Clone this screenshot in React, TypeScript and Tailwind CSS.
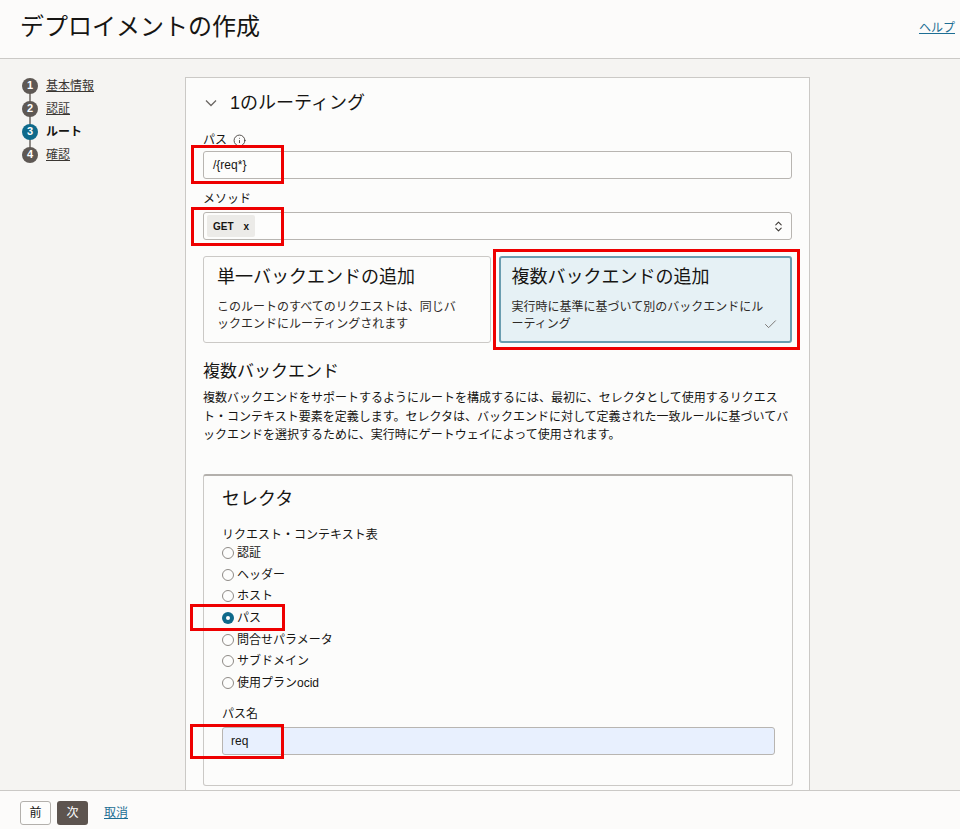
import React from "react";
import { Info, Check, ChevronsUpDown } from "lucide-react";

const steps = [
  { n: 1, label: "基本情報", active: false },
  { n: 2, label: "認証", active: false },
  { n: 3, label: "ルート", active: true },
  { n: 4, label: "確認", active: false },
];

const radios = ["認証", "ヘッダー", "ホスト", "パス", "問合せパラメータ", "サブドメイン", "使用プランocid"];

function RedBox({ cls }: { cls: string }) {
  return <div className={"pointer-events-none absolute border-[3px] border-[#ee0000] " + cls} />;
}

export default function App() {
  return (
    <div className="relative w-[960px] h-[829px] overflow-hidden bg-[#f5f4f2] text-[#161513] font-['Liberation_Sans','Noto_Sans_CJK_JP',sans-serif]">
      {/* Header */}
      <div className="h-[59px] bg-[#fcfbfa] border-b border-[#cbc9c6] flex items-center justify-between pl-[20px] pr-[5px]">
        <h1 className="text-[24px] leading-[30px] font-normal pb-[4px]">デプロイメントの作成</h1>
        <a className="text-[12px] leading-[16px] underline text-[#1d6e94] pb-[2px]">ヘルプ</a>
      </div>

      {/* Body */}
      <div className="flex h-[731px] overflow-hidden">
        <nav className="w-[185px] shrink-0 pl-[22px] pt-[15px]">
          <div className="relative">
            <div className="absolute left-[7px] top-[11px] h-[70px] w-[2px] bg-[#8d8985]" />
            {steps.map((s) => (
              <div key={s.n} className="relative flex items-center h-[23px]">
                <div
                  className={
                    "w-[16px] h-[16px] rounded-full flex items-center justify-center text-white text-[11px] font-bold leading-none " +
                    (s.active ? "bg-[#0f6a8b]" : "bg-[#5e5854]")
                  }
                >
                  {s.n}
                </div>
                <span
                  className={
                    "ml-[8px] text-[12px] leading-[16px] " +
                    (s.active ? "font-bold text-[#161513]" : "underline text-[#3a3632]")
                  }
                >
                  {s.label}
                </span>
              </div>
            ))}
          </div>
        </nav>

        <div className="mt-[18px] w-[625px] h-[760px] shrink-0 bg-[#fcfcfb] border border-[#cbc9c6] px-[17px] pt-[12px]">
          {/* heading */}
          <div className="flex items-center h-[26px]">
            <svg width="12" height="8" viewBox="0 0 12 8" className="ml-[2px]">
              <path d="M1 1.5 L6 6.5 L11 1.5" fill="none" stroke="#6b6763" strokeWidth="1.3" />
            </svg>
            <span className="ml-[13px] text-[18px] leading-[26px]">1のルーティング</span>
          </div>

          {/* path */}
          <div className="mt-[16px] flex items-center h-[16px] text-[12px] leading-[16px]">
            <span>パス</span>
            <Info size={13} strokeWidth={1.6} className="ml-[6px] text-[#3d3935]" />
          </div>
          <div className="mt-[3px] h-[28px] border border-[#b8b5b1] rounded-[3px] bg-[#fdfdfc] flex items-center pl-[9px] text-[12px]">
            /{"{"}req*{"}"}
          </div>

          {/* method */}
          <div className="mt-[12px] text-[12px] leading-[16px]">メソッド</div>
          <div className="mt-[5px] h-[28px] border border-[#b8b5b1] rounded-[3px] bg-[#fdfdfc] flex items-center justify-between pl-[3px] pr-[6px]">
            <div className="h-[22px] w-[48px] bg-[#ecebe8] rounded-[2px] flex items-center pl-[6px] text-[10px] font-semibold">
              <span>GET</span>
              <span className="ml-[10px] text-[10px] font-bold">x</span>
            </div>
            <ChevronsUpDown size={13} strokeWidth={2} className="text-[#3d3935]" />
          </div>

          {/* cards */}
          <div className="mt-[16px] flex gap-[8px] h-[87px]">
            <div className="w-[288px] h-full border border-[#cbc9c6] rounded-[3px] bg-[#fcfcfb] pl-[13px] pt-[8px]">
              <div className="text-[18px] leading-[24px]">単一バックエンドの追加</div>
              <div className="mt-[10px] text-[12px] leading-[17px] text-[#2e2a27]">
                このルートのすべてのリクエストは、同じバ
                <br />
                ックエンドにルーティングされます
              </div>
            </div>
            <div className="relative w-[294px] h-full border-2 border-[#6a9db0] rounded-[3px] bg-[#e6f1f5] pl-[11px] pt-[7px]">
              <div className="text-[18px] leading-[24px]">複数バックエンドの追加</div>
              <div className="mt-[10px] text-[12px] leading-[17px] text-[#2e2a27]">
                実行時に基準に基づいて別のバックエンドにル
                <br />
                ーティング
              </div>
              <Check size={15} strokeWidth={1.4} className="absolute right-[12px] bottom-[9px] text-[#6b6763]" />
            </div>
          </div>

          {/* multi backend */}
          <div className="mt-[17px] text-[17px] leading-[24px]">複数バックエンド</div>
          <p className="mt-[5px] text-[12px] leading-[18.5px] w-[600px]">
            複数バックエンドをサポートするようにルートを構成するには、最初に、セレクタとして使用するリクエス
            <br />
            ト・コンテキスト要素を定義します。セレクタは、バックエンドに対して定義された一致ルールに基づいてバ
            <br />
            ックエンドを選択するために、実行時にゲートウェイによって使用されます。
          </p>

          {/* selector */}
          <div className="mt-[29px] w-[590px] border border-[#cbc9c6] border-t-2 border-t-[#b3b0ac] rounded-[3px] pl-[18px] pr-[17px] pt-[11px] pb-[30px]">
            <div className="text-[18px] leading-[24px]">セレクタ</div>
            <div className="mt-[16px] text-[12px] leading-[16px]">リクエスト・コンテキスト表</div>
            <div>
              {radios.map((r) => {
                const sel = r === "パス";
                return (
                  <div key={r} className="flex items-center h-[21.6px] text-[12px]">
                    {sel ? (
                      <span className="w-[12px] h-[12px] rounded-full bg-[#0f6a8b] flex items-center justify-center">
                        <span className="w-[4px] h-[4px] rounded-full bg-white" />
                      </span>
                    ) : (
                      <span className="w-[12px] h-[12px] rounded-full border border-[#8f8b87] bg-[#fdfdfc]" />
                    )}
                    <span className="ml-[3px]">{r}</span>
                  </div>
                );
              })}
            </div>
            <div className="mt-[12px] text-[12px] leading-[16px]">パス名</div>
            <div className="mt-[5px] h-[28px] border border-[#b8b5b1] rounded-[3px] bg-[#e8f0fe] flex items-center pl-[8px] text-[12px]">
              req
            </div>
          </div>
        </div>
      </div>

      {/* Footer */}
      <div className="h-[39px] bg-[#fcfbfa] border-t border-[#cbc9c6] flex items-start pt-[10px] pl-[20px]">
        <button className="h-[24px] w-[31px] border border-[#b3b0ac] rounded-[3px] bg-[#fdfdfc] text-[12px] leading-none">
          前
        </button>
        <button className="ml-[6px] h-[24px] w-[31px] rounded-[3px] bg-[#5d544f] text-white text-[12px] leading-none">
          次
        </button>
        <a className="ml-[16px] h-[24px] flex items-center text-[12px] underline text-[#1d6e94]">取消</a>
      </div>

      {/* annotation boxes */}
      <RedBox cls="left-[191px] top-[145px] w-[93px] h-[39px]" />
      <RedBox cls="left-[191px] top-[207px] w-[93px] h-[39px]" />
      <RedBox cls="left-[493px] top-[249px] w-[307px] h-[101px]" />
      <RedBox cls="left-[190px] top-[604px] w-[95px] h-[27px]" />
      <RedBox cls="left-[190px] top-[724px] w-[94px] h-[35px]" />
    </div>
  );
}
